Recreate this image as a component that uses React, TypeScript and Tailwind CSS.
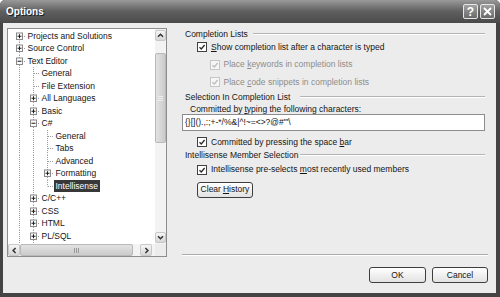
import React from "react";

type Line = "full" | "top" | "bottom" | "none";
type Kind = "plus" | "minus" | "leaf" | "stub";
type Row = { label: string; level: number; kind: Kind; lines: Line[]; selected?: boolean };

const rows: Row[] = [
  { label: "Projects and Solutions", level: 0, kind: "plus", lines: ["bottom"] },
  { label: "Source Control", level: 0, kind: "plus", lines: ["full"] },
  { label: "Text Editor", level: 0, kind: "minus", lines: ["full"] },
  { label: "General", level: 1, kind: "leaf", lines: ["full", "full"] },
  { label: "File Extension", level: 1, kind: "leaf", lines: ["full", "full"] },
  { label: "All Languages", level: 1, kind: "plus", lines: ["full", "full"] },
  { label: "Basic", level: 1, kind: "plus", lines: ["full", "full"] },
  { label: "C#", level: 1, kind: "minus", lines: ["full", "full"] },
  { label: "General", level: 2, kind: "leaf", lines: ["full", "full", "full"] },
  { label: "Tabs", level: 2, kind: "leaf", lines: ["full", "full", "full"] },
  { label: "Advanced", level: 2, kind: "leaf", lines: ["full", "full", "full"] },
  { label: "Formatting", level: 2, kind: "plus", lines: ["full", "full", "full"] },
  { label: "Intellisense", level: 2, kind: "leaf", lines: ["full", "full", "top"], selected: true },
  { label: "C/C++", level: 1, kind: "plus", lines: ["full", "full"] },
  { label: "CSS", level: 1, kind: "plus", lines: ["full", "full"] },
  { label: "HTML", level: 1, kind: "plus", lines: ["full", "full"] },
  { label: "PL/SQL", level: 1, kind: "plus", lines: ["full", "full"] },
  { label: "", level: 1, kind: "stub", lines: ["full", "full"] },
];

const dot = { stroke: "#9c9c9c", strokeDasharray: "1 1", strokeWidth: 1 };

const TreeCell = ({ line, own, kind }: { line: Line; own: boolean; kind: Kind }) => (
  <svg width="14" height="12.5" viewBox="0 0 14 12.5" className="shrink-0">
    {line === "full" && <line x1="7.5" y1="0" x2="7.5" y2="12.5" {...dot} />}
    {line === "top" && <line x1="7.5" y1="0" x2="7.5" y2="6.5" {...dot} />}
    {line === "bottom" && <line x1="7.5" y1="6.5" x2="7.5" y2="12.5" {...dot} />}
    {own && kind !== "stub" && <line x1="8" y1="6.5" x2="14" y2="6.5" {...dot} />}
    {own && (kind === "plus" || kind === "minus") && (
      <g>
        <rect x="4.5" y="3" width="6" height="6.5" fill="#fbfbfb" stroke="#8a8a8a" />
        <line x1="5.5" y1="6.25" x2="9.5" y2="6.25" stroke="#1e1e1e" />
        {kind === "plus" && <line x1="7.5" y1="4.25" x2="7.5" y2="8.25" stroke="#1e1e1e" />}
      </g>
    )}
  </svg>
);

const Chevron = ({ dir }: { dir: "up" | "down" | "left" | "right" }) => {
  const pts = {
    up: "1,4.8 3.5,2.3 6,4.8",
    down: "1,2.3 3.5,4.8 6,2.3",
    left: "4.6,1 2.1,3.5 4.6,6",
    right: "2.4,1 4.9,3.5 2.4,6",
  }[dir];
  return (
    <svg width="7" height="7" viewBox="0 0 7 7">
      <polyline points={pts} fill="none" stroke="#333" strokeWidth="1.5" />
    </svg>
  );
};

const Grip = ({ vertical }: { vertical?: boolean }) =>
  vertical ? (
    <svg width="5" height="5" viewBox="0 0 5 5">
      <line x1="0" y1="0.5" x2="5" y2="0.5" stroke="#eee" />
      <line x1="0" y1="2.5" x2="5" y2="2.5" stroke="#eee" />
      <line x1="0" y1="4.5" x2="5" y2="4.5" stroke="#eee" />
    </svg>
  ) : (
    <svg width="5" height="5" viewBox="0 0 5 5">
      <line x1="0.5" y1="0" x2="0.5" y2="5" stroke="#9a9a9a" />
      <line x1="2.5" y1="0" x2="2.5" y2="5" stroke="#9a9a9a" />
      <line x1="4.5" y1="0" x2="4.5" y2="5" stroke="#9a9a9a" />
    </svg>
  );

const Check = ({ disabled }: { disabled?: boolean }) => (
  <span
    className={
      disabled
        ? "w-[10px] h-[10px] shrink-0 border border-[#c6c6c6] bg-[#f6f6f6] flex items-center justify-center"
        : "w-[10px] h-[10px] shrink-0 border border-[#404040] bg-white flex items-center justify-center"
    }
  >
    <svg width="8" height="8" viewBox="0 0 8 8">
      <path d="M1.5 4.2 L3.3 6 L6.6 2" fill="none" stroke={disabled ? "#bdbdbd" : "#2a2a2a"} strokeWidth="1.3" />
    </svg>
  </span>
);

const Header = ({ label, w }: { label: string; w: string }) => (
  <div className="flex items-center h-[12px] pl-[3px] pr-[3px]">
    <span className={w}>{label}</span>
    <div className="flex-1 h-[2px] border-t border-b border-t-[#b4b4b4] border-b-white" />
  </div>
);

export default function App() {
  return (
    <div className="w-[500px] h-[297px] bg-[#444] rounded-t-[5px] flex flex-col overflow-hidden font-['Liberation_Sans',Arial,sans-serif] text-[8.5px] leading-none text-[#151515]">
      {/* title bar */}
      <div className="h-[23px] shrink-0 flex items-center pl-[6px] pr-[5px] rounded-t-[5px] bg-linear-to-b from-[#9a9a9a] via-[#5f5f5f] to-[#4a4a4a]">
        <span className="text-white font-bold text-[10px] [text-shadow:1px_1px_0_#1e1e1e]">Options</span>
        <div className="ml-auto flex gap-[2px]">
          <div className="w-[15px] h-[15px] rounded-[2px] border border-[#e6e6e6] bg-linear-to-b from-[#a2a2a2] to-[#6a6a6a] flex items-center justify-center text-white font-bold text-[12px]">
            ?
          </div>
          <div className="w-[15px] h-[15px] rounded-[2px] border border-[#e6e6e6] bg-linear-to-b from-[#a2a2a2] to-[#6a6a6a] flex items-center justify-center">
            <svg width="9" height="9" viewBox="0 0 9 9">
              <path d="M1 1 L8 8 M8 1 L1 8" stroke="#fff" strokeWidth="1.8" />
            </svg>
          </div>
        </div>
      </div>

      {/* body */}
      <div className="flex-1 ml-[3px] mr-[4px] mb-[4px] bg-[#ececec] flex flex-col pt-[5px] pl-[4px] pr-[8px]">
        <div className="flex h-[229px]">
          {/* tree */}
          <div className="w-[160px] h-[229px] shrink-0 border border-[#8d8d8d] bg-white grid grid-cols-[1fr_11px] grid-rows-[1fr_12px]">
            <div className="overflow-hidden pt-[0.5px]">
              {rows.map((r, i) => (
                <div key={i} className="flex h-[12.5px] items-stretch pl-[4px]">
                  {r.lines.map((l, k) => (
                    <TreeCell key={k} line={l} own={k === r.level} kind={r.kind} />
                  ))}
                  {r.label && (
                    <span
                      className={
                        r.selected
                          ? "flex items-center px-[1.5px] whitespace-nowrap bg-[#383838] text-white"
                          : "flex items-center px-[1.5px] whitespace-nowrap"
                      }
                    >
                      {r.label}
                    </span>
                  )}
                </div>
              ))}
            </div>

            {/* vertical scrollbar */}
            <div className="flex flex-col bg-[#f3f3f3] pt-[1px] pb-[1px]">
              <div className="h-[11px] rounded-[2px] border border-[#c8c8c8] bg-linear-to-b from-[#f6f6f6] to-[#d6d6d6] flex items-center justify-center">
                <Chevron dir="up" />
              </div>
              <div className="flex-1">
                <div className="mt-[12px] h-[90px] rounded-[2px] border border-[#b9b9b9] bg-linear-to-r from-[#e2e2e2] to-[#cbcbcb] flex items-center justify-center">
                  <Grip vertical />
                </div>
              </div>
              <div className="h-[11px] rounded-[2px] border border-[#c8c8c8] bg-linear-to-b from-[#f6f6f6] to-[#d6d6d6] flex items-center justify-center">
                <Chevron dir="down" />
              </div>
            </div>

            {/* horizontal scrollbar */}
            <div className="flex bg-[#f3f3f3] pr-[3px]">
              <div className="w-[12px] rounded-[2px] border border-[#c8c8c8] bg-linear-to-b from-[#f6f6f6] to-[#d6d6d6] flex items-center justify-center">
                <Chevron dir="left" />
              </div>
              <div className="w-[113px] rounded-[2px] border border-[#b9b9b9] bg-linear-to-b from-[#e2e2e2] to-[#cbcbcb] flex items-center justify-center">
                <Grip />
              </div>
              <div className="flex-1" />
              <div className="w-[12px] rounded-[2px] border border-[#c8c8c8] bg-linear-to-b from-[#f6f6f6] to-[#d6d6d6] flex items-center justify-center">
                <Chevron dir="right" />
              </div>
            </div>
            <div className="bg-[#ececec]" />
          </div>

          {/* right pane */}
          <div className="ml-[15px] flex-1 flex flex-col">
            <Header label="Completion Lists" w="w-[68px]" />
            <div className="flex items-center h-[12px] gap-[4px] ml-[15px] mt-[1px]">
              <Check />
              <span>
                <span className="underline">S</span>how completion list after a character is typed
              </span>
            </div>
            <div className="flex items-center h-[12px] gap-[3.5px] ml-[28px] mt-[5.5px] text-[#8c8c8c]">
              <Check disabled />
              <span>
                Place <span className="underline">k</span>eywords in completion lists
              </span>
            </div>
            <div className="flex items-center h-[12px] gap-[3.5px] ml-[28px] mt-[5.5px] text-[#8c8c8c]">
              <Check disabled />
              <span>
                Place <span className="underline">c</span>ode snippets in completion lists
              </span>
            </div>
            <div className="mt-[3px]">
              <Header label="Selection In Completion List" w="w-[115px]" />
            </div>
            <div className="flex items-center h-[10px] ml-[8px] mt-[1px]">
              Committed by <span className="underline ml-[2px]">t</span>yping the following characters:
            </div>
            <div className="h-[17px] mr-[3px] border border-[#8d8d8d] bg-white flex items-center px-[2px]">
              {"{}[]().,:;+-*/%&|^!~=<>?@#'\"\\"}
            </div>
            <div className="flex items-center h-[12px] gap-[4px] ml-[15px] mt-[5px]">
              <Check />
              <span>
                Committed by pressing the space <span className="underline">b</span>ar
              </span>
            </div>
            <div className="mt-[1px]">
              <Header label="Intellisense Member Selection" w="w-[115px]" />
            </div>
            <div className="flex items-center h-[12px] gap-[4px] ml-[15px] mt-[2.5px]">
              <Check />
              <span>
                Intellisense pre-selects <span className="underline">m</span>ost recently used members
              </span>
            </div>
            <button className="mt-[6px] ml-[15px] w-[56px] h-[16px] rounded-[3px] border border-[#3e3e3e] bg-linear-to-b from-white to-[#e2e2e2] flex items-center justify-center">
              Clear <span className="underline ml-[2px]">H</span>istory
            </button>
            <div className="mt-auto mb-[1px] h-[2px] border-t border-b border-t-[#ababab] border-b-white" />
          </div>
        </div>

        {/* buttons */}
        <div className="flex justify-end gap-[6px] mt-[10px]">
          <button className="w-[57px] h-[16px] rounded-[3px] border border-[#3e3e3e] bg-linear-to-b from-white to-[#e2e2e2] flex items-center justify-center">
            OK
          </button>
          <button className="w-[56px] h-[16px] rounded-[3px] border border-[#3e3e3e] bg-linear-to-b from-white to-[#e2e2e2] flex items-center justify-center">
            Cancel
          </button>
        </div>
      </div>
    </div>
  );
}
